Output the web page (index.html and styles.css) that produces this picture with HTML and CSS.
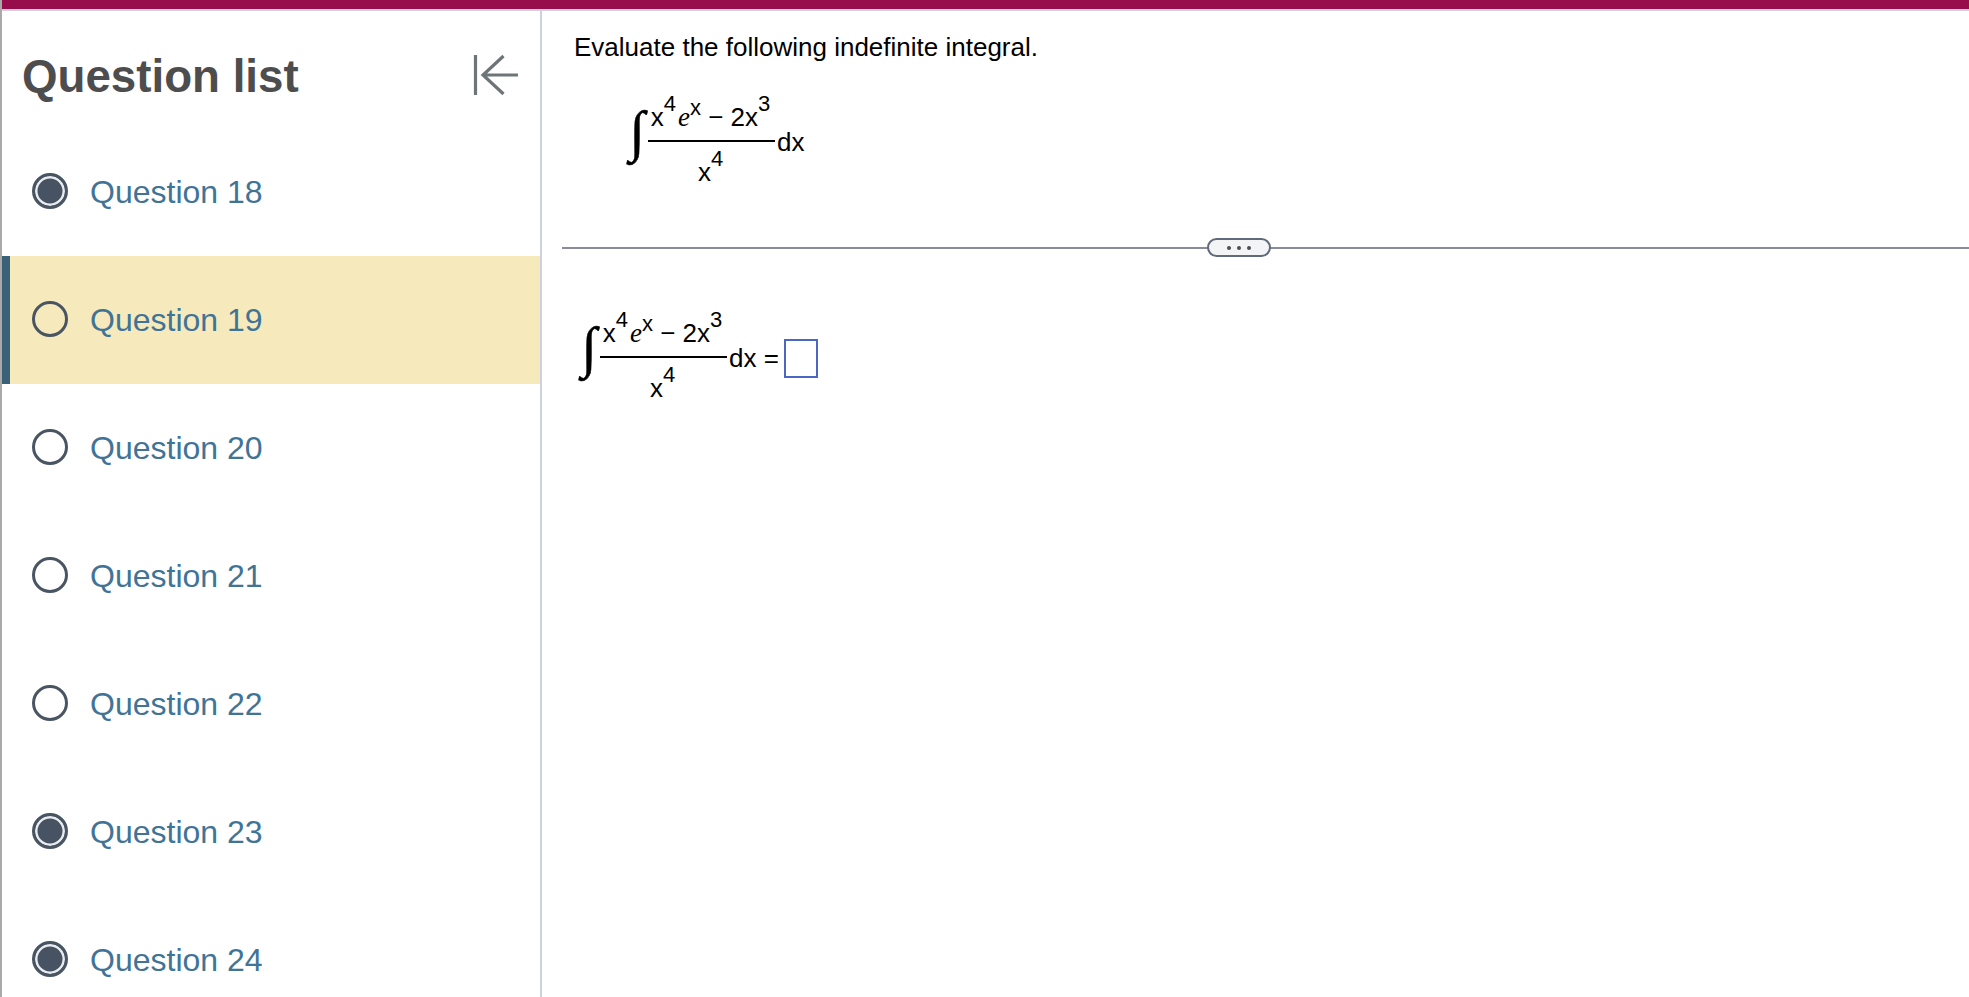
FILE: index.html
```html
<!DOCTYPE html>
<html lang="en">
<head>
<meta charset="utf-8">
<title>Question list</title>
<link rel="stylesheet" href="styles.css">
</head>
<body>
<div class="edge-marks"></div>
<div class="topbar"></div>
<div class="layout">
  <aside class="sidebar">
    <header class="side-head">
      <h2 class="side-title">Question list</h2>
      <svg class="collapse" viewBox="0 0 46 42" width="46" height="42" aria-hidden="true">
        <path d="M2.5 1v40M45 21H10M30.500 2 10 21l20.500 19" fill="none" stroke="#6e7577" stroke-width="3.2"/>
      </svg>
    </header>
    <ul class="qlist">
      <li class="qitem"><span class="radio done"></span><a class="qlink">Question 18</a></li>
      <li class="qitem active"><span class="radio"></span><a class="qlink">Question 19</a></li>
      <li class="qitem"><span class="radio"></span><a class="qlink">Question 20</a></li>
      <li class="qitem"><span class="radio"></span><a class="qlink">Question 21</a></li>
      <li class="qitem"><span class="radio"></span><a class="qlink">Question 22</a></li>
      <li class="qitem"><span class="radio done"></span><a class="qlink">Question 23</a></li>
      <li class="qitem"><span class="radio done"></span><a class="qlink">Question 24</a></li>
    </ul>
  </aside>
  <main class="content">
    <section class="prompt">
      <p class="lead">Evaluate the following indefinite integral.</p>
      <div class="math math-a">
        <span class="integral">∫</span>
        <span class="frac">
          <span class="num">x<sup>4</sup><i>e</i><sup class="supx">x</sup> − 2x<sup>3</sup></span>
          <span class="den">x<sup>4</sup></span>
        </span>
        <span class="tail">dx</span>
      </div>
    </section>
    <div class="divider"><span class="pill"><b></b><b></b><b></b></span></div>
    <section class="answer">
      <div class="math">
        <span class="integral">∫</span>
        <span class="frac">
          <span class="num">x<sup>4</sup><i>e</i><sup class="supx">x</sup> − 2x<sup>3</sup></span>
          <span class="den">x<sup>4</sup></span>
        </span>
        <span class="tail">dx =</span>
        <span class="box"></span>
      </div>
    </section>
  </main>
</div>
</body>
</html>
```
FILE: styles.css
```css
* { box-sizing: border-box; }
html, body { margin: 0; height: 100%; }
body {
  position: relative;
  overflow: hidden;
  background: #fff;
  color: #000;
  font-family: "Liberation Sans", Arial, sans-serif;
  display: flex;
  flex-direction: column;
  border-left: 2px solid #a9a9a9;
}
.edge-marks {
  position: absolute;
  left: -2px;
  top: 0;
  width: 2px;
  height: 997px;
  background: linear-gradient(to bottom,
    transparent 53px, #333 53px, #333 58px, transparent 58px,
    transparent 67px, #333 67px, #333 70px, transparent 70px,
    transparent 105px, #333 105px, #333 108px, transparent 108px,
    transparent 112px, #333 112px, #333 115px, transparent 115px,
    transparent 119px, #333 119px, #333 122px, transparent 122px,
    transparent 240px, #333 240px, #333 247px, transparent 247px,
    transparent 260px, #555 260px, #555 265px, transparent 265px,
    transparent 333px, #555 333px, #555 340px, transparent 340px,
    transparent 359px, #666 359px, #666 361px, transparent 361px,
    transparent 432px, #777 432px, #777 434px, transparent 434px,
    transparent 584px, #444 584px, #444 587px, transparent 587px,
    transparent 604px, #444 604px, #444 607px, transparent 607px,
    transparent 746px, #555 746px, #555 750px, transparent 750px,
    transparent 968px, #666 968px, #666 972px, transparent 972px,
    transparent 976px, #666 976px, #666 979px, transparent 979px,
    transparent 983px, #666 983px, #666 987px, transparent 987px);
}
.topbar {
  height: 11px;
  flex: none;
  background: #970c4b;
  border-bottom: 2px solid #d0d0e0;
}
.layout { flex: 1; display: flex; min-height: 0; }

.sidebar {
  width: 540px;
  flex: none;
  border-right: 2px solid #ccd0e0;
}
.side-head {
  height: 117px;
  display: flex;
  align-items: center;
  justify-content: space-between;
  padding: 14px 21px 0 20px;
}
.side-title {
  margin: 0;
  font-size: 45.7px;
  font-weight: 700;
  color: #4d4d4d;
}
.collapse { display: block; margin-top: -4px; }

.qlist { list-style: none; margin: 0; padding: 0; }
.qitem {
  height: 128px;
  display: flex;
  align-items: center;
  gap: 22px;
  padding-left: 30px;
}
.qitem.active {
  background: #f6eabc;
  box-shadow: inset 8px 0 0 #3a6178;
}
.qlink { font-size: 32px; color: #3f7497; }
.radio {
  width: 36px;
  height: 36px;
  flex: none;
  border: 3.5px solid #4a5563;
  border-radius: 50%;
  margin-top: -2px;
}
.radio.done {
  background: #475362;
  box-shadow: inset 0 0 0 2.5px #e9ecef;
}

.content { flex: 1; min-width: 0; }
.prompt { padding: 21px 0 0 32px; height: 236px; }
.lead { margin: 0; font-size: 26px; line-height: 30px; }
.math {
  display: flex;
  align-items: center;
  font-size: 26px;
}
.math-a { margin: 40px 0 0 52px; }
.integral {
  font-family: "Liberation Serif", serif;
  font-size: 56px;
  line-height: 50px;
  width: 22px;
  display: flex;
  justify-content: center;
  margin-bottom: 27px;
  -webkit-text-stroke: 0.5px #000;
}
.frac {
  display: flex;
  flex-direction: column;
  align-items: center;
  width: 127px;
}
.num, .den { line-height: 30px; white-space: nowrap; }
.num { border-bottom: 2px solid #000; width: 100%; text-align: center; padding: 0 2px 8px 0; }
.den { padding: 15px 2px 0 0; }
.num i { font-family: "Liberation Serif", serif; margin-left: 2px; font-size: 27px; }
sup { font-size: 22px; line-height: 0; vertical-align: 15px; }
.supx { font-size: 22px; vertical-align: 11px; }
.tail { margin: 0 0 5px 2px; white-space: nowrap; }

.divider {
  height: 2px;
  margin-left: 20px;
  background: #8a8a9e;
  position: relative;
}
.pill {
  position: absolute;
  left: 645px;
  top: -9px;
  width: 64px;
  height: 19px;
  border: 2.5px solid #5f6b7a;
  border-radius: 10px;
  background: #f2f4f6;
  display: flex;
  justify-content: center;
  align-items: center;
  gap: 6px;
}
.pill b { width: 4px; height: 4px; border-radius: 50%; background: #4a4f57; }

.answer { padding: 69px 0 0 36px; }
.box {
  width: 34px;
  height: 39px;
  border: 2px solid #4a67c4;
  margin: 0 0 5px 5px;
}
```
